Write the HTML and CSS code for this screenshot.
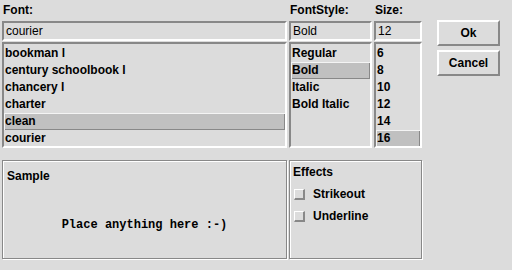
FILE: index.html
```html
<!DOCTYPE html>
<html>
<head>
  <title>Font Dialog</title>
  <link rel="stylesheet" href="styles.css">
</head>
<body>

<div class="dialog">
  <div class="top">
    <div class="font-col">
      <div class="label">Font:</div>
      <div class="entry">courier</div>
      <div class="list">
        <div class="item">bookman l</div>
        <div class="item">century schoolbook l</div>
        <div class="item">chancery l</div>
        <div class="item">charter</div>
        <div class="item selected">clean</div>
        <div class="item">courier</div>
      </div>
    </div>

    <div class="style-col">
      <div class="label">FontStyle:</div>
      <div class="entry">Bold</div>
      <div class="list">
        <div class="item">Regular</div>
        <div class="item selected">Bold</div>
        <div class="item">Italic</div>
        <div class="item">Bold Italic</div>
      </div>
    </div>

    <div class="size-col">
      <div class="label">Size:</div>
      <div class="entry">12</div>
      <div class="list">
        <div class="item">6</div>
        <div class="item">8</div>
        <div class="item">10</div>
        <div class="item">12</div>
        <div class="item">14</div>
        <div class="item selected">16</div>
      </div>
    </div>

    <div class="buttons">
      <button class="ok">Ok</button>
      <button class="cancel">Cancel</button>
    </div>
  </div>

  <div class="bottom">
    <div class="frame sample">
      <div class="frame-title">Sample</div>
      <div class="sample-text">Place anything here :-)</div>
    </div>
    <div class="frame effects">
      <div class="frame-title">Effects</div>
      <div class="check"><span class="box"></span>Strikeout</div>
      <div class="check"><span class="box"></span>Underline</div>
    </div>
  </div>
</div>

</body>
</html>
```

FILE: styles.css
```css
body {
  margin: 0;
  background: #dcdcdc;
  font-family: "Liberation Sans", Arial, sans-serif;
  font-size: 12px;
  font-weight: bold;
  color: #000;
}

.dialog {
  width: 512px;
  height: 270px;
  padding: 0 2px;
  box-sizing: border-box;
}

.top {
  display: flex;
  gap: 2px;
}

.font-col {
  width: 285px;
}

.style-col {
  width: 83px;
}

.size-col {
  width: 48px;
}

.label {
  height: 21px;
  line-height: 21px;
  padding-left: 1px;
}

.entry {
  height: 20px;
  box-sizing: border-box;
  border: 2px solid;
  border-color: #888 #fff #fff #888;
  padding-left: 2px;
  line-height: 16px;
  font-weight: normal;
  margin-bottom: 1px;
}

.list {
  height: 106px;
  box-sizing: border-box;
  border: 2px solid;
  border-color: #888 #fff #fff #888;
  padding-top: 1px;
  overflow: hidden;
}

.item {
  height: 17px;
  line-height: 17px;
  padding-left: 1px;
  white-space: nowrap;
}

.selected {
  background: #c0c0c0;
  box-shadow: inset 1px 1px 0 #f4f4f4, inset -1px -1px 0 #888;
}

.buttons {
  margin-left: 13px;
  width: 63px;
  padding-top: 20px;
  display: flex;
  flex-direction: column;
  gap: 4px;
}

button {
  height: 26px;
  background: #dcdcdc;
  border: 2px solid;
  border-color: #fff #888 #888 #fff;
  font-family: "Liberation Sans", Arial, sans-serif;
  font-size: 12px;
  font-weight: bold;
  color: #000;
  padding: 0;
}

.bottom {
  display: flex;
  gap: 2px;
  margin-top: 12px;
}

.frame {
  height: 99px;
  box-sizing: border-box;
  border: 1px solid #888;
  box-shadow: inset 1px 1px 0 #fff, 1px 1px 0 #fff;
  display: flex;
  flex-direction: column;
}

.sample {
  width: 285px;
  padding: 7px 4px 0;
}

.effects {
  width: 133px;
  padding: 3px 3px 0;
}

.frame-title {
  line-height: 16px;
}

.sample-text {
  flex: 1;
  display: flex;
  align-items: center;
  justify-content: center;
  font-family: "Liberation Mono", "Courier New", monospace;
  font-size: 12px;
  padding-top: 8px;
}

.check {
  display: flex;
  align-items: center;
  line-height: 16px;
  margin-top: 6px;
}

.box {
  width: 11px;
  height: 11px;
  box-sizing: border-box;
  border-style: solid;
  border-width: 1px 2px 2px 1px;
  border-color: #fff #888 #888 #fff;
  margin: 0 8px 0 1px;
}
```
